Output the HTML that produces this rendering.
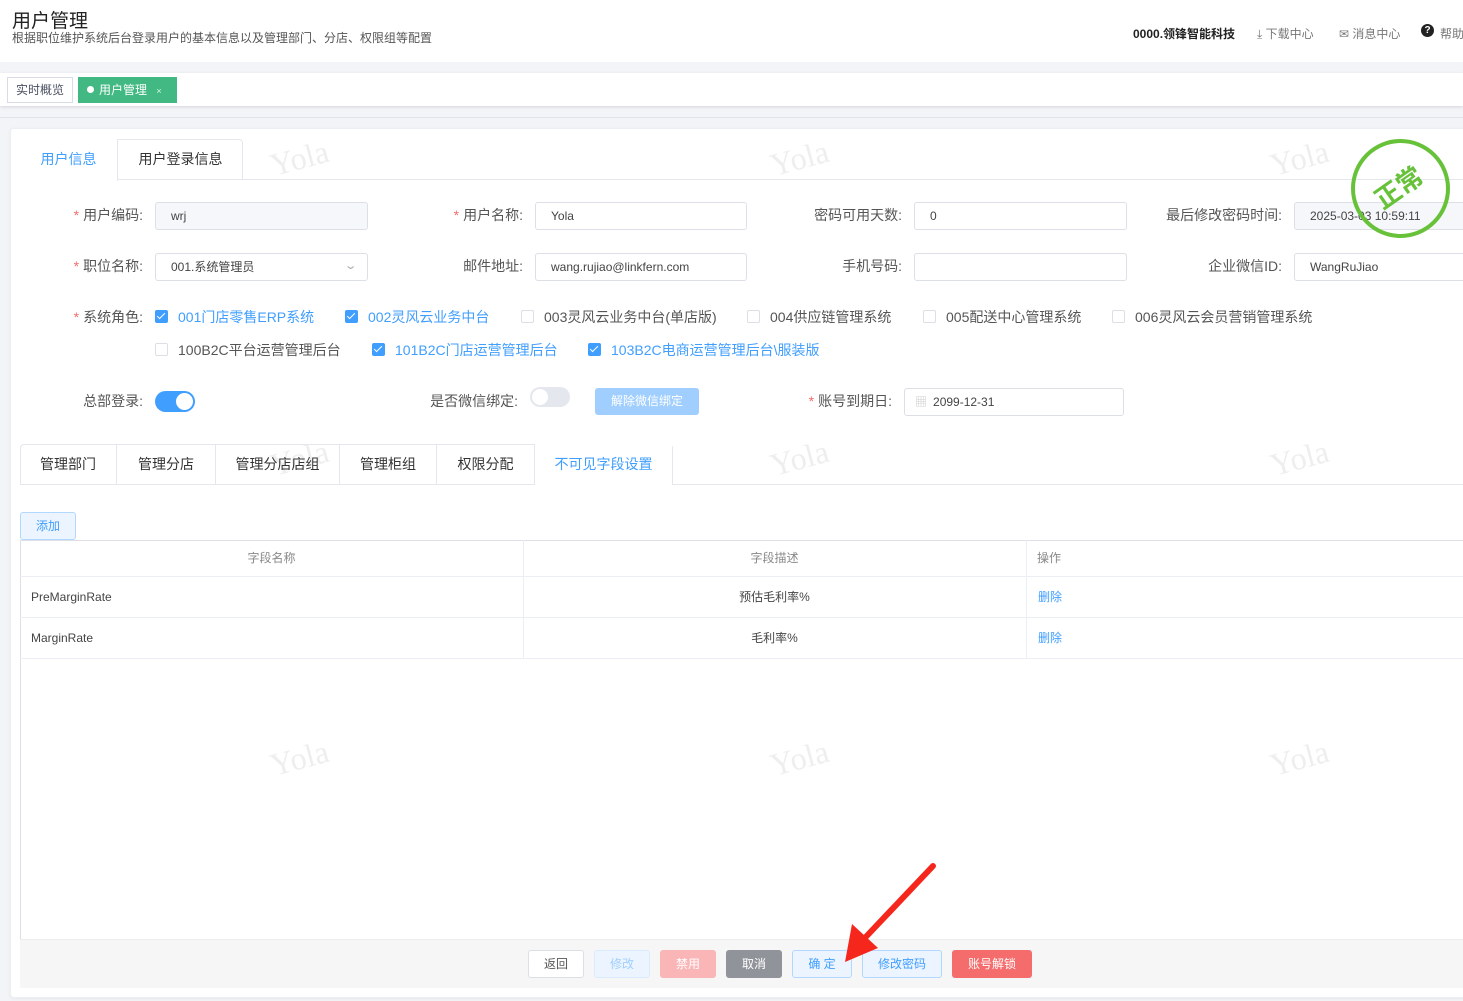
<!DOCTYPE html>
<html><head><meta charset="utf-8"><style>
*{box-sizing:border-box;margin:0;padding:0}
body{width:1463px;height:1001px;overflow:hidden;background:#f3f4f7;font-family:"Liberation Sans","Noto Sans CJK SC",sans-serif;color:#333;position:relative}
.a{position:absolute;white-space:nowrap}
.lbl{position:absolute;font-size:14px;color:#555;text-align:right;line-height:20px}
.lbl b{color:#f56c6c;font-weight:normal;margin-right:4px}
.inp{position:absolute;height:28px;border:1px solid #dcdfe6;border-radius:3px;background:#fff;font-size:12px;color:#444;line-height:26px;padding-left:15px}
.cb{position:absolute;font-size:14px;line-height:20px;color:#555}
.cb i{display:inline-block;width:13px;height:13px;border:1px solid #dcdfe6;border-radius:2px;vertical-align:-1px;margin-right:10px;background:#fff;position:relative}
.cb.on{color:#409eff}.cb.on i{background:#409eff;border-color:#409eff}
.cb.on i:after{content:"";position:absolute;left:3px;top:0px;width:3px;height:7px;border:solid #fff;border-width:0 1.5px 1.5px 0;transform:rotate(45deg)}
.tab{position:absolute;height:41px;border-right:1px solid #e4e7ed;font-size:14px;line-height:41px;text-align:center;color:#333}
.btn{position:absolute;top:950px;height:28px;border-radius:3px;font-size:12px;line-height:26px;text-align:center;border:1px solid}
.wm{position:absolute;font-family:"Liberation Serif",serif;font-size:32px;color:#eee;transform:rotate(-15deg)}
.cell{position:absolute;font-size:12px;color:#444;line-height:16px}
</style></head><body>
<div class="a" style="left:0;top:0;width:1463px;height:62px;background:#fff"></div>
<div class="a" style="left:12px;top:6px;font-size:19px;color:#222">用户管理</div>
<div class="a" style="left:12px;top:29px;font-size:12px;color:#555">根据职位维护系统后台登录用户的基本信息以及管理部门、分店、权限组等配置</div>
<div class="a" style="left:1133px;top:25px;font-size:12px;font-weight:bold;color:#222">0000.领锋智能科技</div>
<div class="a" style="left:1257px;top:25px;font-size:12px;color:#777">⤓ 下载中心</div>
<div class="a" style="left:1339px;top:25px;font-size:12px;color:#777">✉ 消息中心</div>
<div class="a" style="left:1421px;top:24px;width:13px;height:13px;border-radius:50%;background:#222;color:#fff;font-size:10px;text-align:center;line-height:13px;font-weight:bold">?</div>
<div class="a" style="left:1440px;top:25px;font-size:12px;color:#777">帮助</div>

<div class="a" style="left:0;top:73px;width:1463px;height:33px;background:#fff;box-shadow:0 1px 3px rgba(0,0,0,.12)"></div>
<div class="a" style="left:7px;top:77px;width:66px;height:26px;border:1px solid #d8dce5;font-size:12px;line-height:24px;text-align:center;color:#495060;background:#fff">实时概览</div>
<div class="a" style="left:78px;top:77px;width:99px;height:26px;background:#42b983;color:#fff;font-size:12px;line-height:26px;padding-left:9px"><span style="display:inline-block;width:7px;height:7px;border-radius:50%;background:#fff;margin-right:5px;vertical-align:1px"></span>用户管理 <span style="font-size:9px;margin-left:6px;opacity:.8">×</span></div>
<div class="a" style="left:0;top:117px;width:1463px;height:1px;background:#dfe2e8"></div>

<div class="a" style="left:10px;top:128px;width:1460px;height:870px;background:#fff;border:1px solid #ebeef5;border-radius:4px;box-shadow:0 1px 4px rgba(0,0,0,.05)"></div>

<div class="wm" style="left:270px;top:140px">Yola</div><div class="wm" style="left:770px;top:140px">Yola</div><div class="wm" style="left:1270px;top:140px">Yola</div>
<div class="wm" style="left:270px;top:440px">Yola</div><div class="wm" style="left:770px;top:440px">Yola</div><div class="wm" style="left:1270px;top:440px">Yola</div>
<div class="wm" style="left:270px;top:740px">Yola</div><div class="wm" style="left:770px;top:740px">Yola</div><div class="wm" style="left:1270px;top:740px">Yola</div>

<!-- top tabs -->
<div class="a" style="left:20px;top:179px;width:1443px;height:1px;background:#e4e7ed"></div>
<div class="a" style="left:20px;top:139px;width:223px;height:41px;border:1px solid #e4e7ed;border-bottom:none;border-radius:4px 4px 0 0;background:transparent"></div>
<div class="tab" style="left:20px;top:139px;width:98px;color:#409eff;background:#fff;height:42px">用户信息</div>
<div class="tab" style="left:118px;top:139px;width:125px;border-right:none">用户登录信息</div>

<!-- row1 -->
<div class="lbl" style="left:40px;top:205px;width:103px"><b>*</b>用户编码:</div>
<div class="inp" style="left:155px;top:202px;width:213px;background:#f5f7fa">wrj</div>
<div class="lbl" style="left:420px;top:205px;width:103px"><b>*</b>用户名称:</div>
<div class="inp" style="left:535px;top:202px;width:212px">Yola</div>
<div class="lbl" style="left:780px;top:205px;width:122px">密码可用天数:</div>
<div class="inp" style="left:914px;top:202px;width:213px">0</div>
<div class="lbl" style="left:1140px;top:205px;width:142px">最后修改密码时间:</div>
<div class="inp" style="left:1294px;top:202px;width:180px;background:#f5f7fa">2025-03-03 10:59:11</div>
<!-- row2 -->
<div class="lbl" style="left:40px;top:256px;width:103px"><b>*</b>职位名称:</div>
<div class="inp" style="left:155px;top:253px;width:213px">001.系统管理员<span style="position:absolute;right:12px;top:-1px;color:#aaa;font-size:11px;transform:scaleX(1.5)">⌄</span></div>
<div class="lbl" style="left:420px;top:256px;width:103px">邮件地址:</div>
<div class="inp" style="left:535px;top:253px;width:212px">wang.rujiao@linkfern.com</div>
<div class="lbl" style="left:780px;top:256px;width:122px">手机号码:</div>
<div class="inp" style="left:914px;top:253px;width:213px"></div>
<div class="lbl" style="left:1140px;top:256px;width:142px">企业微信ID:</div>
<div class="inp" style="left:1294px;top:253px;width:180px">WangRuJiao</div>
<!-- roles -->
<div class="lbl" style="left:40px;top:307px;width:103px"><b>*</b>系统角色:</div>
<div class="cb on" style="left:155px;top:307px"><i></i>001门店零售ERP系统</div>
<div class="cb on" style="left:345px;top:307px"><i></i>002灵风云业务中台</div>
<div class="cb" style="left:521px;top:307px"><i></i>003灵风云业务中台(单店版)</div>
<div class="cb" style="left:747px;top:307px"><i></i>004供应链管理系统</div>
<div class="cb" style="left:923px;top:307px"><i></i>005配送中心管理系统</div>
<div class="cb" style="left:1112px;top:307px"><i></i>006灵风云会员营销管理系统</div>
<div class="cb" style="left:155px;top:340px"><i></i>100B2C平台运营管理后台</div>
<div class="cb on" style="left:372px;top:340px"><i></i>101B2C门店运营管理后台</div>
<div class="cb on" style="left:588px;top:340px"><i></i>103B2C电商运营管理后台\服装版</div>
<!-- row4 -->
<div class="lbl" style="left:40px;top:391px;width:103px">总部登录:</div>
<div class="a" style="left:155px;top:391px;width:40px;height:21px;border-radius:11px;background:#409eff"><div class="a" style="left:21px;top:2px;width:17px;height:17px;border-radius:50%;background:#fff"></div></div>
<div class="lbl" style="left:400px;top:391px;width:118px">是否微信绑定:</div>
<div class="a" style="left:530px;top:387px;width:40px;height:20px;border-radius:10px;background:#e4e7ed"><div class="a" style="left:2px;top:2px;width:16px;height:16px;border-radius:50%;background:#fff"></div></div>
<div class="a" style="left:595px;top:388px;width:104px;height:27px;border-radius:3px;background:#a0cfff;color:#fff;font-size:12px;text-align:center;line-height:27px">解除微信绑定</div>
<div class="lbl" style="left:780px;top:391px;width:112px"><b>*</b>账号到期日:</div>
<div class="inp" style="left:904px;top:388px;width:220px;padding-left:10px"><span style="color:#ccc;margin-right:6px">▦</span>2099-12-31</div>

<!-- second tabs -->
<div class="a" style="left:20px;top:484px;width:1443px;height:1px;background:#e4e7ed"></div>
<div class="a" style="left:20px;top:444px;width:653px;height:41px;border:1px solid #e4e7ed;border-bottom:none;border-radius:4px 4px 0 0"></div>
<div class="tab" style="left:20px;top:444px;width:97px">管理部门</div>
<div class="tab" style="left:117px;top:444px;width:99px">管理分店</div>
<div class="tab" style="left:216px;top:444px;width:124px">管理分店店组</div>
<div class="tab" style="left:340px;top:444px;width:97px">管理柜组</div>
<div class="tab" style="left:437px;top:444px;width:98px">权限分配</div>
<div class="tab" style="left:535px;top:444px;width:137px;color:#409eff;background:#fff;height:42px;border-right:none">不可见字段设置</div>

<div class="a" style="left:20px;top:512px;width:56px;height:28px;border:1px solid #b3d8ff;background:#ecf5ff;color:#409eff;font-size:12px;text-align:center;line-height:26px;border-radius:3px">添加</div>
<!-- table -->
<div class="a" style="left:20px;top:540px;width:1443px;height:400px;border-left:1px solid #dcdfe6;border-top:1px solid #dcdfe6"></div>
<div class="a" style="left:20px;top:576px;width:1443px;height:1px;background:#ebeef5"></div>
<div class="a" style="left:20px;top:617px;width:1443px;height:1px;background:#ebeef5"></div>
<div class="a" style="left:20px;top:658px;width:1443px;height:1px;background:#ebeef5"></div>
<div class="a" style="left:523px;top:540px;width:1px;height:119px;background:#ebeef5"></div>
<div class="a" style="left:1026px;top:540px;width:1px;height:119px;background:#ebeef5"></div>
<div class="cell" style="left:20px;top:550px;width:503px;text-align:center;color:#888">字段名称</div>
<div class="cell" style="left:523px;top:550px;width:503px;text-align:center;color:#888">字段描述</div>
<div class="cell" style="left:1037px;top:550px;color:#888">操作</div>
<div class="cell" style="left:31px;top:589px">PreMarginRate</div>
<div class="cell" style="left:523px;top:589px;width:503px;text-align:center">预估毛利率%</div>
<div class="cell" style="left:1038px;top:589px;color:#409eff">删除</div>
<div class="cell" style="left:31px;top:630px">MarginRate</div>
<div class="cell" style="left:523px;top:630px;width:503px;text-align:center">毛利率%</div>
<div class="cell" style="left:1038px;top:630px;color:#409eff">删除</div>

<!-- footer -->
<div class="a" style="left:20px;top:939px;width:1443px;height:49px;background:#f6f6f6;border-top:1px solid #ececec"></div>
<div class="btn" style="left:528px;width:56px;background:#fff;border-color:#dcdfe6;color:#555">返回</div>
<div class="btn" style="left:594px;width:56px;background:#ecf5ff;border-color:#d9ecff;color:#a0cfff">修改</div>
<div class="btn" style="left:660px;width:56px;background:#fab6b6;border-color:#fab6b6;color:#fff">禁用</div>
<div class="btn" style="left:726px;width:56px;background:#909399;border-color:#909399;color:#fff">取消</div>
<div class="btn" style="left:792px;width:60px;background:#ecf5ff;border-color:#b3d8ff;color:#409eff">确 定</div>
<div class="btn" style="left:862px;width:80px;background:#ecf5ff;border-color:#b3d8ff;color:#409eff">修改密码</div>
<div class="btn" style="left:952px;width:80px;background:#f56c6c;border-color:#f56c6c;color:#fff">账号解锁</div>

<!-- stamp -->
<div class="a" style="left:1351px;top:139px;width:99px;height:99px;border:4px solid #67c23a;border-radius:50%;background:rgba(255,255,255,0)"></div>
<div class="a" style="left:1372px;top:168px;font-size:26px;font-weight:bold;color:#67c23a;transform:rotate(-35deg)">正常</div>

<svg class="a" style="left:0;top:0" width="1463" height="1001"><line x1="933" y1="866" x2="862" y2="941" stroke="#f5271c" stroke-width="6" stroke-linecap="round"/><polygon points="845,962 852,924 878,948" fill="#f5271c"/></svg>
</body></html>
